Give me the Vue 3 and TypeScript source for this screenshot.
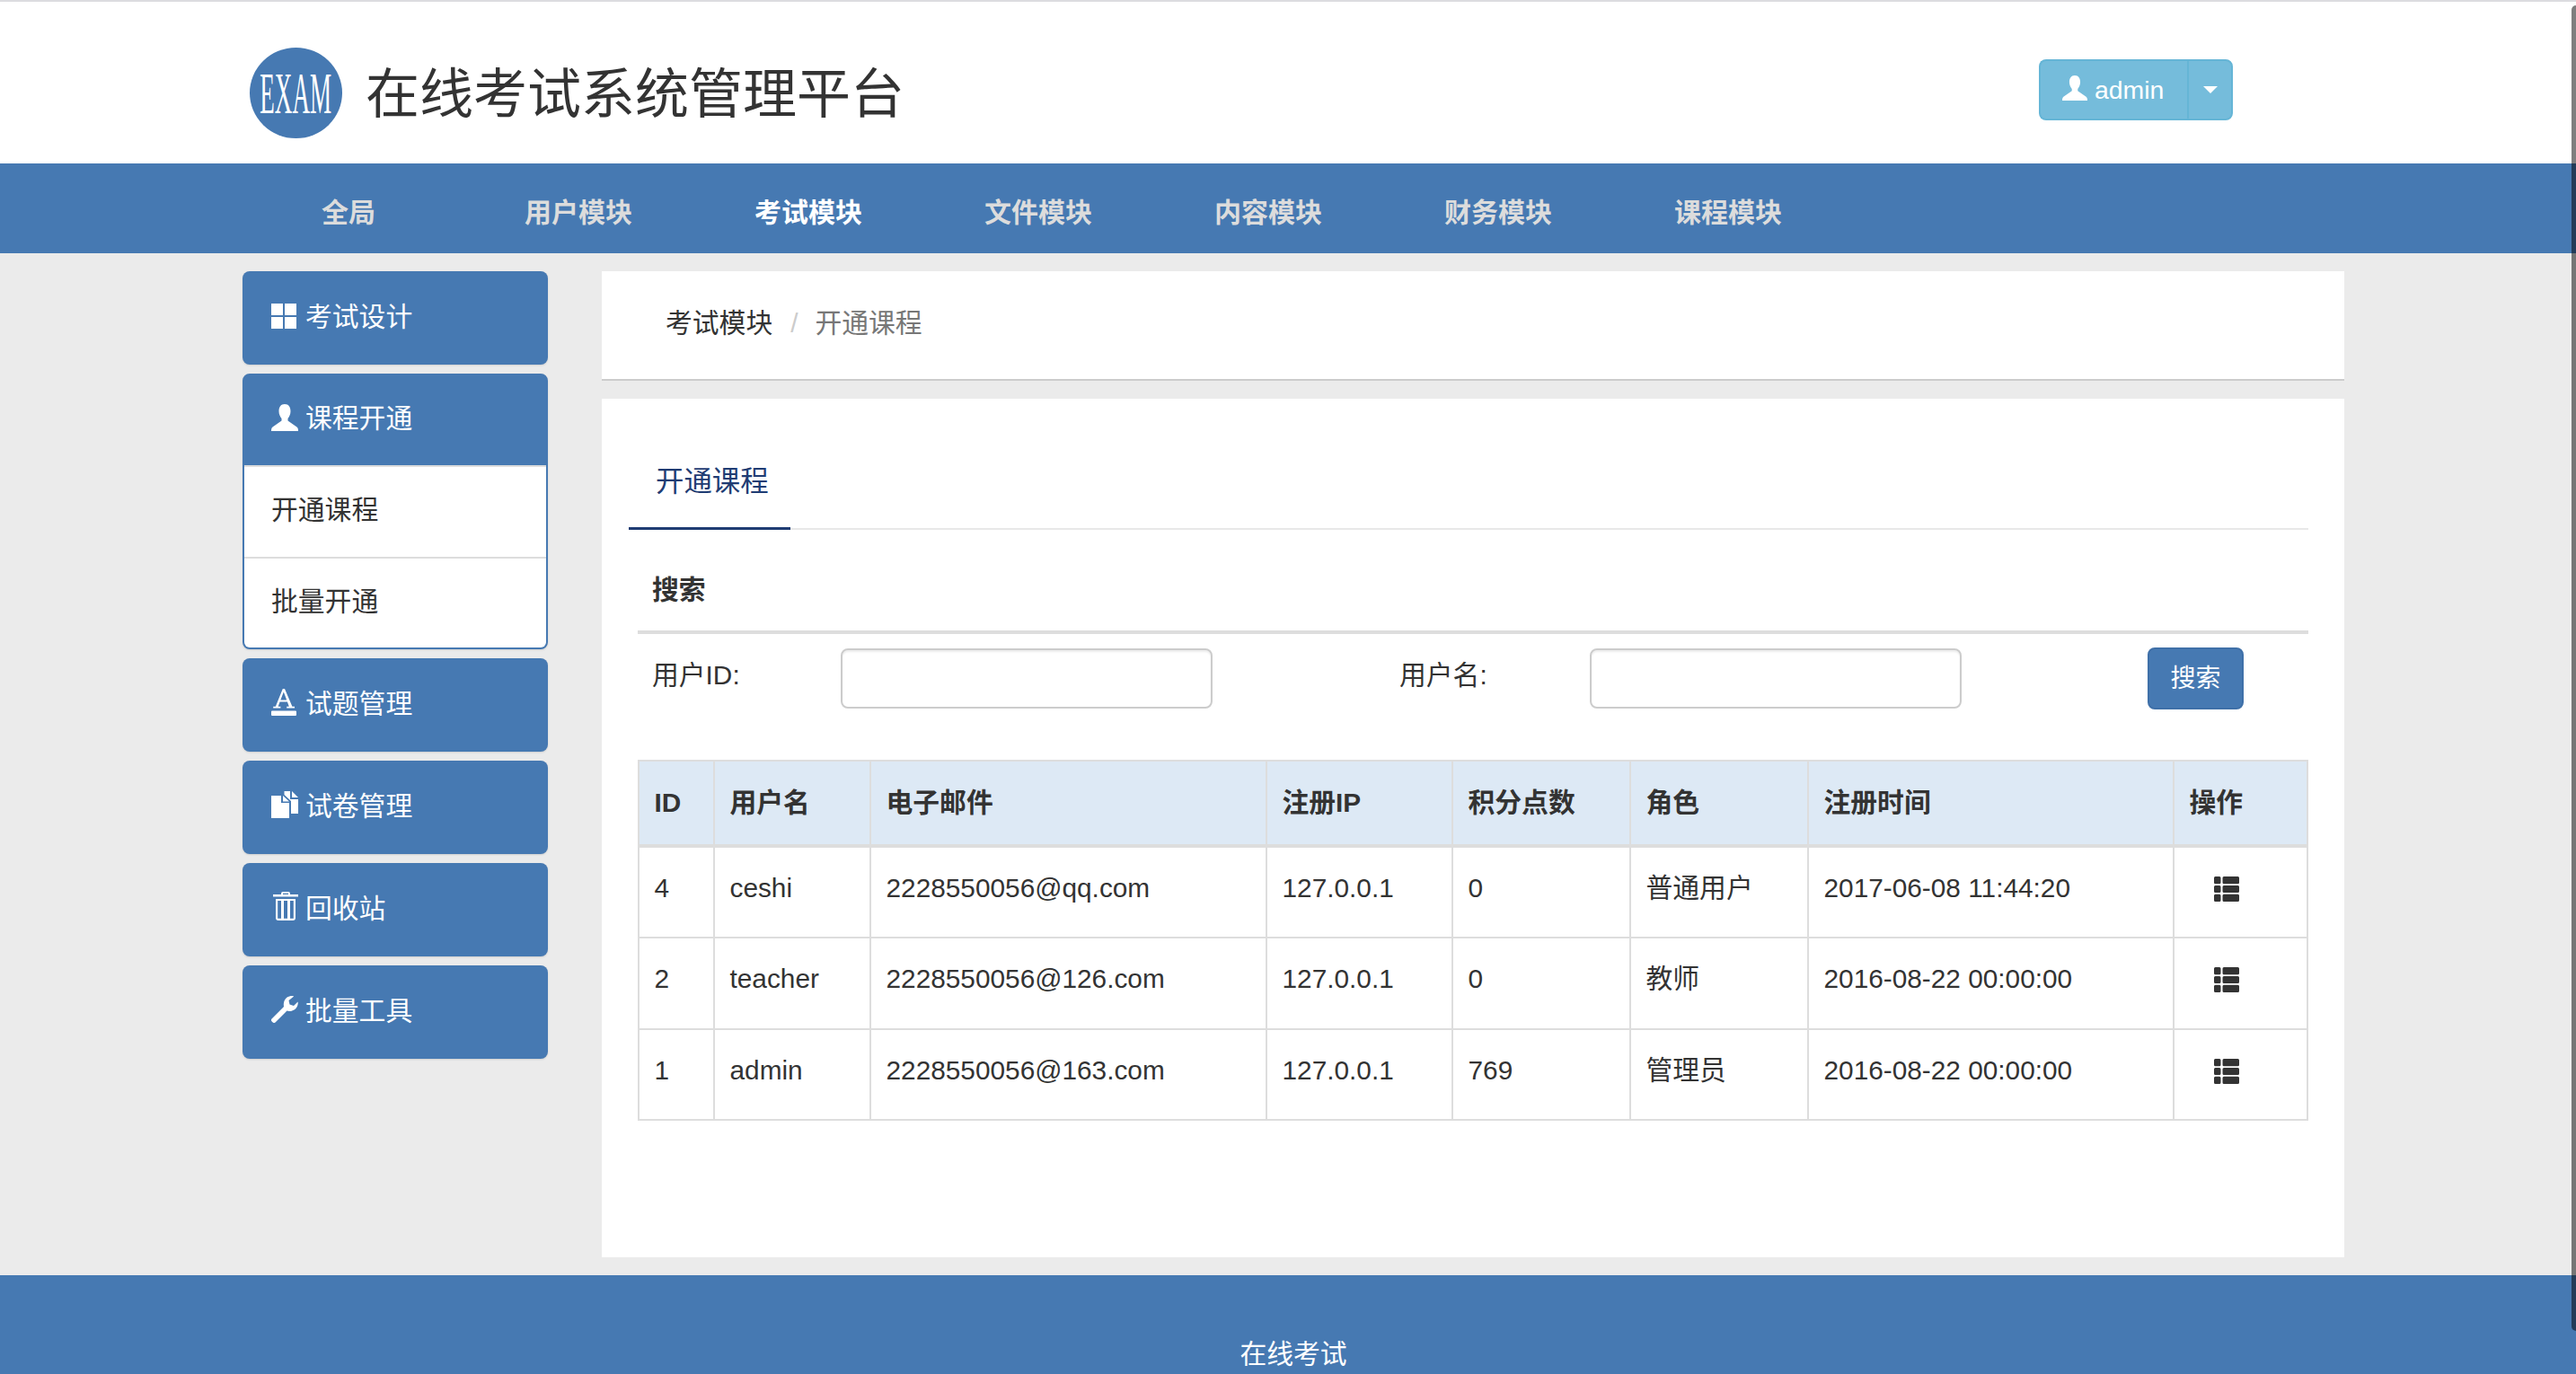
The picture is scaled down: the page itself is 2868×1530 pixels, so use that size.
<script setup lang="ts">
interface MenuItem {
  label: string
  view: string
  w: number
  h: number
  d: string
  children?: string[]
}

const navItems: { label: string; active?: boolean }[] = [
  { label: '全局' },
  { label: '用户模块' },
  { label: '考试模块', active: true },
  { label: '文件模块' },
  { label: '内容模块' },
  { label: '财务模块' },
  { label: '课程模块' },
]

const userPath =
  'M15 0C10.5 0 8.5 3.5 8.5 8C8.5 11.5 10 14 11.5 16V18.5L1.5 25.5C.5 26.3 0 27.5 0 30H30C30 27.5 29.5 26.3 28.5 25.5L18.5 18.5V16C20 14 21.5 11.5 21.5 8C21.5 3.5 19.5 0 15 0Z'

const menu: MenuItem[] = [
  {
    label: '考试设计',
    view: '0 0 30 28',
    w: 30,
    h: 28,
    d: 'M0 0H13V13H0ZM15 0H28V13H15ZM0 15H13V28H0ZM15 15H28V28H15Z',
  },
  {
    label: '课程开通',
    view: '0 0 30 30',
    w: 30,
    h: 30,
    d: userPath,
    children: ['开通课程', '批量开通'],
  },
  {
    label: '试题管理',
    view: '0 0 30 30',
    w: 30,
    h: 30,
    d: 'M12.8 0H15L23.4 19.8H26V21.6H17.2V19.8H19.8L17.9 14.6H9.6L7.7 19.8H10.4V21.6H2.2V19.8H4.8ZM10.4 12.6H17.2L13.8 3.6ZM1 24.6H27Q28 24.6 28 25.6V29Q28 30 27 30H1Q0 30 0 29V25.6Q0 24.6 1 24.6Z',
  },
  {
    label: '试卷管理',
    view: '0 0 30 30',
    w: 30,
    h: 30,
    d: 'M0 5H11V13H20V30H0ZM13 5L20 11.5H13ZM14.5 0H21V9H30V25H22V11L14.5 4ZM23 0L30 7H23Z',
  },
  {
    label: '回收站',
    view: '0 0 30 32',
    w: 30,
    h: 32,
    d: 'M11 3V2Q11 0 13 0H19Q21 0 21 2V3H30V5.5H2V3ZM13 3H19V1.8H13ZM5 8H27V29Q27 32 24 32H8Q5 32 5 29ZM7.2 10V29.8H11V10ZM14 10V29.8H18V10ZM21 10V29.8H24.8V10Z',
  },
  {
    label: '批量工具',
    view: '0 0 30 30',
    w: 30,
    h: 30,
    d: 'M.5 25.5L14 12C13 6 16 1 21 .2C22.5 0 24 .1 25.2 .6L19.5 5L20.5 9.5L25 11L29.6 6.5C30.5 12 26 17 20 17C19 17 18.2 16.8 17.5 16.5L4.5 29.5C3.5 30.3 2.5 30.2 1.5 29.2L.5 28.2C-.2 27.4 -.2 26.4 .5 25.5Z',
  },
]

const listIcon =
  'M1.5 0H6Q7.5 0 7.5 1.5V6.7Q7.5 8.2 6 8.2H1.5Q0 8.2 0 6.7V1.5Q0 0 1.5 0ZM11 0H26.5Q28 0 28 1.5V6.7Q28 8.2 26.5 8.2H11Q9.5 8.2 9.5 6.7V1.5Q9.5 0 11 0ZM1.5 9.9H6Q7.5 9.9 7.5 11.4V16.6Q7.5 18.1 6 18.1H1.5Q0 18.1 0 16.6V11.4Q0 9.9 1.5 9.9ZM11 9.9H26.5Q28 9.9 28 11.4V16.6Q28 18.1 26.5 18.1H11Q9.5 18.1 9.5 16.6V11.4Q9.5 9.9 11 9.9ZM1.5 19.8H6Q7.5 19.8 7.5 21.3V26.5Q7.5 28 6 28H1.5Q0 28 0 26.5V21.3Q0 19.8 1.5 19.8ZM11 19.8H26.5Q28 19.8 28 21.3V26.5Q28 28 26.5 28H11Q9.5 28 9.5 26.5V21.3Q9.5 19.8 11 19.8Z'

const columns = ['ID', '用户名', '电子邮件', '注册IP', '积分点数', '角色', '注册时间', '操作']
const colWidths = [84, 174, 441, 207, 198, 198, 407, 149]

const rows = [
  { id: 4, name: 'ceshi', email: '2228550056@qq.com', ip: '127.0.0.1', points: 0, role: '普通用户', time: '2017-06-08 11:44:20' },
  { id: 2, name: 'teacher', email: '2228550056@126.com', ip: '127.0.0.1', points: 0, role: '教师', time: '2016-08-22 00:00:00' },
  { id: 1, name: 'admin', email: '2228550056@163.com', ip: '127.0.0.1', points: 769, role: '管理员', time: '2016-08-22 00:00:00' },
]
</script>

<template>
  <div class="page">
    <header class="topbar">
      <div class="brand">
        <div class="logo"><span class="logo-text">EXAM</span></div>
        <h1 class="title">在线考试系统管理平台</h1>
      </div>
      <div class="user-btn">
        <button class="user-main" type="button">
          <svg class="user-ico" viewBox="0 0 30 30"><path :d="userPath" /></svg>
          <span>admin</span>
        </button>
        <button class="user-caret" type="button" aria-label="menu"><i class="caret"></i></button>
      </div>
    </header>

    <nav class="nav">
      <a v-for="item in navItems" :key="item.label" class="nav-item" :class="{ active: item.active }">{{ item.label }}</a>
    </nav>

    <div class="main">
      <aside class="sidebar">
        <div v-for="item in menu" :key="item.label" class="menu" :class="{ open: item.children }">
          <div class="menu-head">
            <span class="menu-ico">
              <svg :viewBox="item.view" :width="item.w" :height="item.h"><path :d="item.d" fill-rule="evenodd" /></svg>
            </span>
            <span>{{ item.label }}</span>
          </div>
          <ul v-if="item.children" class="sub">
            <li v-for="c in item.children" :key="c">{{ c }}</li>
          </ul>
        </div>
      </aside>

      <section class="content">
        <div class="crumb">
          <span>考试模块</span><span class="sep">/</span><span class="crumb-cur">开通课程</span>
        </div>

        <div class="card">
          <div class="tabs"><span class="tab">开通课程</span></div>

          <div class="panel">
            <div class="search-title">搜索</div>
            <form class="search-row" @submit.prevent>
              <label class="lab lab-id">用户ID:</label>
              <input class="inp" type="text" />
              <label class="lab lab-name">用户名:</label>
              <input class="inp" type="text" />
              <button class="search-btn" type="submit">搜索</button>
            </form>

            <table class="grid">
              <colgroup>
                <col v-for="(w, i) in colWidths" :key="i" :style="{ width: w + 'px' }" />
              </colgroup>
              <thead>
                <tr>
                  <th v-for="c in columns" :key="c">{{ c }}</th>
                </tr>
              </thead>
              <tbody>
                <tr v-for="r in rows" :key="r.id">
                  <td>{{ r.id }}</td>
                  <td>{{ r.name }}</td>
                  <td>{{ r.email }}</td>
                  <td>{{ r.ip }}</td>
                  <td>{{ r.points }}</td>
                  <td>{{ r.role }}</td>
                  <td>{{ r.time }}</td>
                  <td class="op">
                    <svg viewBox="0 0 28 28" width="28" height="28"><path :d="listIcon" /></svg>
                  </td>
                </tr>
              </tbody>
            </table>
          </div>
        </div>
      </section>
    </div>

    <footer class="footer">在线考试</footer>
    <div class="scrollbar"></div>
  </div>
</template>

<style>
html,
body {
  margin: 0;
  padding: 0;
  background: #ebebeb;
}
</style>

<style scoped>
.page {
  position: relative;
  width: 2868px;
  height: 1530px;
  overflow: hidden;
  display: flex;
  flex-direction: column;
  background: #ebebeb;
  color: #333;
  font-family: "Liberation Sans", "Noto Sans CJK SC", sans-serif;
  font-size: 29.8px;
  line-height: 42px;
}

/* top bar */
.topbar {
  box-sizing: border-box;
  height: 182px;
  background: #fff;
  border-top: 2px solid #dcdce0;
  display: flex;
  justify-content: space-between;
  padding: 51px 382px 0 278px;
}
.brand {
  display: flex;
  align-items: flex-start;
}
.logo {
  width: 103px;
  height: 101px;
  border-radius: 50%;
  background: #4679b2;
  display: flex;
  align-items: center;
  justify-content: center;
  overflow: hidden;
}
.logo-text {
  font-family: "Liberation Serif", serif;
  font-size: 66px;
  line-height: 66px;
  color: #fff;
  transform: scaleX(0.41);
  white-space: nowrap;
}
.title {
  margin: 13px 0 0 26px;
  font-size: 60px;
  line-height: 80px;
  font-weight: 400;
  color: #333;
  white-space: nowrap;
}
.user-btn {
  display: flex;
  margin-top: 13px;
  height: 68px;
}
.user-btn button {
  box-sizing: border-box;
  height: 68px;
  border: 2px solid #65b5d6;
  background: #75bcdb;
  color: #fff;
  font: inherit;
  font-size: 28.4px;
  padding: 0;
  display: flex;
  align-items: center;
}
.user-main {
  width: 165px;
  border-radius: 8px 0 0 8px;
  padding-left: 24px !important;
  border-right: 0 !important;
}
.user-ico {
  width: 28px;
  height: 28px;
  margin-right: 8px;
  margin-top: -4px;
  fill: #fff;
}
.user-caret {
  width: 51px;
  border-radius: 0 8px 8px 0;
  justify-content: center;
}
.caret {
  width: 0;
  height: 0;
  border-left: 8px solid transparent;
  border-right: 8px solid transparent;
  border-top: 8px solid #fff;
}

/* nav */
.nav {
  height: 100px;
  background: #4679b2;
  display: flex;
  padding-left: 260px;
}
.nav-item {
  width: 256px;
  text-align: center;
  line-height: 110px;
  font-size: 30px;
  font-weight: 700;
  color: #dcdcdc;
}
.nav-item.active {
  color: #fff;
}

/* main */
.main {
  flex: 1;
  min-height: 0;
  display: flex;
  gap: 60px;
  padding: 20px 258px 20px 270px;
}
.sidebar {
  flex: none;
  width: 340px;
  display: flex;
  flex-direction: column;
  gap: 10px;
}
.menu {
  box-sizing: border-box;
  height: 104px;
  background: #4679b2;
  border-radius: 8px;
  color: #fff;
  box-shadow: 0 1px 2px rgba(0, 0, 0, 0.12);
  overflow: hidden;
}
.menu-head {
  box-sizing: border-box;
  height: 104px;
  display: flex;
  align-items: flex-end;
  padding: 30px 0 32px 32px;
}
.menu-ico {
  flex: none;
  width: 38px;
  display: flex;
  margin-bottom: 8px;
}
.menu-ico svg {
  display: block;
  fill: #fff;
}
.menu.open {
  height: 307px;
  border: 2px solid #4679b2;
}
.menu.open .menu-head {
  height: 100px;
  padding: 27px 0 31px 30px;
}
.menu.open .menu-ico {
  margin-bottom: 7px;
}
.sub {
  margin: 0;
  padding: 0;
  list-style: none;
  background: #fff;
  color: #333;
  height: 203px;
}
.sub li {
  box-sizing: border-box;
  height: 102px;
  border-top: 2px solid #ddd;
  padding: 27px 0 0 30px;
}
.sub li:last-child {
  height: 101px;
}

/* content */
.content {
  flex: 1;
  min-width: 0;
  display: flex;
  flex-direction: column;
  gap: 20px;
}
.crumb {
  box-sizing: border-box;
  height: 122px;
  background: #fff;
  border-bottom: 2px solid #ccc;
  padding: 37px 0 0 71px;
}
.sep {
  padding: 0 19px 0 20px;
  color: #ccc;
}
.crumb-cur {
  color: #777;
}
.card {
  flex: 1;
  min-height: 0;
  background: #fff;
}
.tabs {
  box-sizing: border-box;
  height: 146px;
  margin: 0 40px 0 30px;
  border-bottom: 2px solid #e8e8e8;
  display: flex;
  align-items: flex-end;
}
.tab {
  box-sizing: border-box;
  width: 180px;
  height: 146px;
  margin-bottom: -2px;
  padding: 71px 0 0 30px;
  font-size: 31.4px;
  line-height: 44px;
  color: #1f3c73;
  border-bottom: 3px solid #1f3c73;
}
.panel {
  margin: 0 40px;
}
.search-title {
  box-sizing: border-box;
  height: 116px;
  padding: 46px 0 0 16px;
  font-weight: 700;
  border-bottom: 4px solid #ddd;
}
.search-row {
  display: flex;
  align-items: flex-start;
  padding: 15px 0 0 16px;
  height: 69px;
}
.lab {
  flex: none;
  line-height: 42px;
  margin-top: 10px;
}
.lab-id {
  width: 210px;
}
.lab-name {
  width: 212px;
  margin-left: 208px;
}
.inp {
  box-sizing: border-box;
  flex: none;
  width: 414px;
  height: 67px;
  margin-top: 1px;
  border: 2px solid #ccc;
  border-radius: 8px;
  background: #fff;
  box-shadow: inset 0 2px 2px rgba(0, 0, 0, 0.075);
  outline: none;
}
.search-btn {
  box-sizing: border-box;
  flex: none;
  width: 107px;
  height: 69px;
  margin-left: 207px;
  border: 2px solid #3f70a8;
  border-radius: 8px;
  background: #4679b2;
  color: #fff;
  font: inherit;
  font-size: 28px;
}

/* table */
.grid {
  table-layout: fixed;
  width: 1858px;
  margin-top: 56px;
  border-collapse: collapse;
  border: 2px solid #ddd;
}
.grid th,
.grid td {
  box-sizing: border-box;
  border: 2px solid #ddd;
  padding: 0 16.5px;
  text-align: left;
}
.grid th {
  height: 95px;
  background: #dde9f5;
  border-bottom-width: 4px;
  font-weight: 700;
}
.grid td {
  height: 101.7px;
  padding-top: 24px;
  padding-bottom: 33px;
  vertical-align: top;
  white-space: nowrap;
}
.grid td.op {
  padding: 32px 0 0 44px;
}
.op svg {
  display: block;
  fill: #333;
}

/* footer */
.footer {
  box-sizing: border-box;
  height: 110px;
  background: #4679b2;
  color: #fff;
  text-align: center;
  padding: 67px 0 0 12px;
}

.scrollbar {
  position: absolute;
  top: 6px;
  right: 0;
  width: 5px;
  height: 1476px;
  background: rgba(0, 0, 0, 0.5);
  border-radius: 6px 0 0 6px;
}
</style>
